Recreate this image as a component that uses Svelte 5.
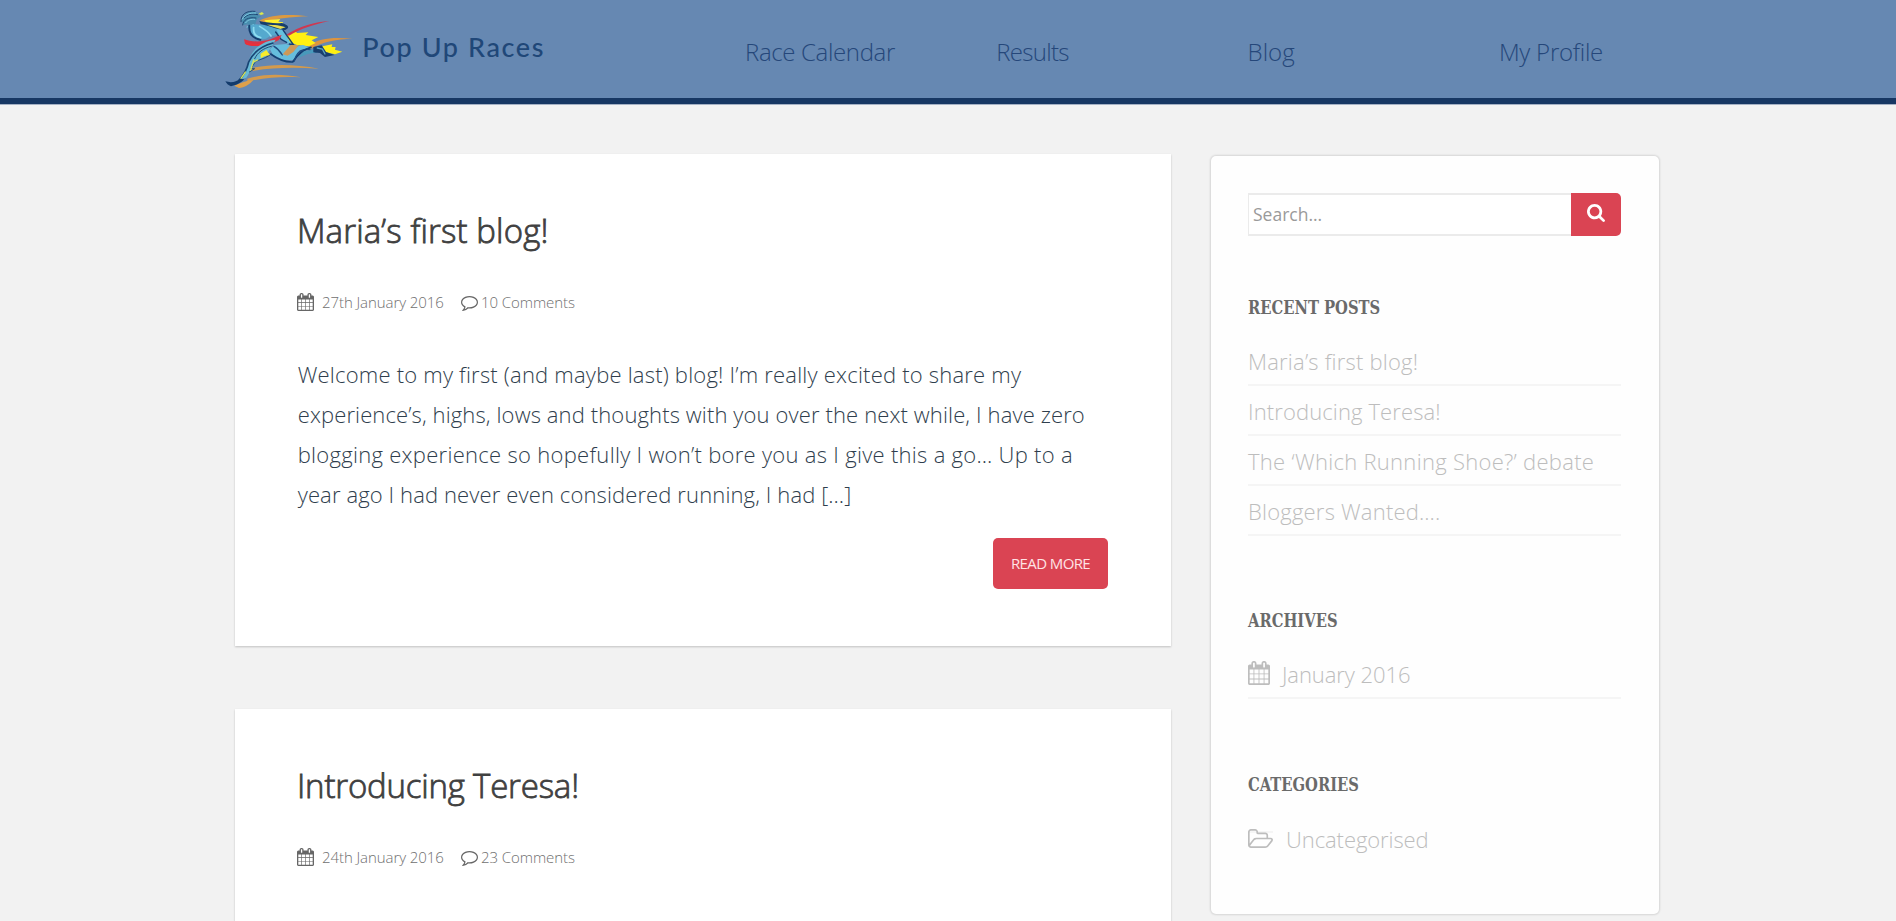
<script>
  const nav = [
    { label: 'Race Calendar', fit: 't1' },
    { label: 'Results', fit: 't3' },
    { label: 'Blog', fit: 't0' },
    { label: 'My Profile', fit: 't2' }
  ];
  const posts = [
    {
      title: 'Maria’s first blog!',
      wide: true,
      date: '27th January 2016',
      comments: '10 Comments',
      lines: [
        ['Welcome to my first (and maybe last) blog! I’m really excited to share my', 'w2'],
        ['experience’s, highs, lows and thoughts with you over the next while, I have zero', 'w1'],
        ['blogging experience so hopefully I won’t bore you as I give this a go… Up to a', 'w3'],
        ['year ago I had never even considered running, I had […]', 'w1']
      ]
    },
    { title: 'Introducing Teresa!', date: '24th January 2016', comments: '23 Comments', lines: [] }
  ];
  const widgets = [
    {
      title: 'Recent Posts',
      items: [
        ['Maria’s first blog!', 'w2'],
        ['Introducing Teresa!', 'w1'],
        ['The ‘Which Running Shoe?’ debate', 'w3'],
        ['Bloggers Wanted….', 'w2']
      ]
    },
    { title: 'Archives', icon: 'calendar', items: [['January 2016', 't4']] },
    { title: 'Categories', icon: 'folder', items: [['Uncategorised', 't4']] }
  ];
</script>

{#snippet calendar()}
  <svg class="calendar" viewBox="64 0 1664 1792" preserveAspectRatio="none" aria-hidden="true"><path d="M192 1664h288v-288h-288v288zm352 0h320v-288h-320v288zm-352-352h288v-320h-288v320zm352 0h320v-320h-320v320zm-352-384h288v-288h-288v288zm736 736h320v-288h-320v288zm-384-736h320v-288h-320v288zm768 736h288v-288h-288v288zm-384-352h320v-320h-320v320zm-352-864v-288q0-13-9.500-22.500t-22.500-9.500h-64q-13 0-22.500 9.500t-9.500 22.500v288q0 13 9.500 22.500t22.500 9.500h64q13 0 22.500-9.500t9.500-22.500zm736 864h288v-320h-288v320zm-384-384h320v-288h-320v288zm384 0h288v-288h-288v288zm32-480v-288q0-13-9.500-22.500t-22.500-9.500h-64q-13 0-22.500 9.500t-9.500 22.500v288q0 13 9.500 22.500t22.500 9.500h64q13 0 22.500-9.500t9.500-22.500zm384-64v1280q0 52-38 90t-90 38h-1408q-52 0-90-38t-38-90v-1280q0-52 38-90t90-38h128v-96q0-66 47-113t113-47h64q66 0 113 47t47 113v96h384v-96q0-66 47-113t113-47h64q66 0 113 47t47 113v96h128q52 0 90 38t38 90z" /></svg>
{/snippet}

<header>
  <div class="bar">
    <a class="brand" href="#home">
      <svg class="runner" viewBox="30 25 385 245" aria-hidden="true">
        <g fill="none" stroke-linecap="round">
          <path d="M110 205C170 192 240 193 312 207C240 203 175 203 112 214Z" fill="#d39a4c" />
          <path d="M97 237C140 223 200 222 258 233C200 231 150 233 97 246Z" fill="#d39a4c" />
          <path d="M58 258C80 247 100 243 115 240C105 254 88 263 72 265Z" fill="#dfa04a" />
          <path d="M135 62C170 44 225 43 280 50C230 52 175 56 140 72Z" fill="#dc9a40" />
          <path d="M283 138C310 115 355 112 412 117C365 119 325 124 287 148Z" fill="#dc9440" />
          <path d="M148 62L196 58L190 66L205 68L192 84L160 76Z" fill="#fff02c" />
          <path d="M215 108L240 92L246 100L280 98L272 106L310 112L290 122L302 130L282 140L246 136L222 126Z" fill="#fff012" />
          <path d="M322 140L352 134L350 142L362 142L360 150L382 156L360 164L334 158Z" fill="#fff012" />
          <path d="M84 52C92 37 112 32 133 40L120 44L139 50L126 58L118 82L96 86L100 74L86 76L80 64Z" fill="#498eaf" />
          <path d="M78 66C76 43 96 32 120 35M88 54C96 44 112 41 128 45M83 76C84 61 99 51 123 55" stroke="#1d4773" stroke-width="3" />
          <path d="M82 58C90 43 105 39 122 40M92 69C99 60 108 58 119 59M96 82L116 75" stroke="#83cce4" stroke-width="3" />
          <path d="M131 42L141 37L147 43L138 46Z" fill="#dae84c" />
          <path d="M98 78L121 74L147 76L180 83L205 95L211 111L189 107L167 108L153 117L126 121L108 108Z" fill="#55a9ce" />
          <path d="M103 78C101 100 111 115 136 120" stroke="#153e6e" stroke-width="6" />
          <path d="M116 84C114 102 122 111 137 114M134 80C153 91 163 101 168 109" stroke="#8ddcf0" stroke-width="5" />
          <path d="M133 64C158 69 179 72 200 70C222 77 225 84 211 91C192 92 172 81 137 73Z" fill="#173e6c" />
          <path d="M156 75C178 75 199 77 212 83L196 88Z" fill="#e7dc52" />
          <path d="M184 88L201 90L232 137L217 132L195 112Z" fill="#66c1df" />
          <path d="M205 92L236 136L223 133M182 97L198 119L215 128" stroke="#143e70" stroke-width="4" />
          <path d="M87 119C109 127 140 128 166 119C180 113 190 109 200 106L192 121C162 139 105 145 90 132Z" fill="#d93446" />
          <path d="M214 105C255 80 300 66 343 65C300 73 255 88 222 108Z" fill="#cf3850" />
          <path d="M95 132C117 137 143 137 169 128" stroke="#ed3037" stroke-width="5" />
          <path d="M178 136L214 133L238 143L264 136L288 146L253 152L235 181L205 181L174 165L165 149Z" fill="#66bddd" />
          <path d="M203 164L227 136L252 136L235 157L218 168Z" fill="#cd9958" />
          <path d="M167 163C190 180 211 188 233 187C245 168 259 151 288 143" stroke="#123f73" stroke-width="5" />
          <path d="M177 140C191 148 196 156 202 166M238 184C243 164 253 153 267 150M275 147L302 158L315 151" stroke="#1d4b80" stroke-width="4" />
          <path d="M247 176L267 155L293 150L307 158L278 163Z" fill="#4899bb" />
          <path d="M295 142L320 137L333 157L359 166L330 172L315 160L295 158Z" fill="#193e6c" />
          <path d="M307 145L322 148L330 163" stroke="#5ba3be" stroke-width="4" />
          <path d="M182 120C143 124 117 145 105 173L94 208L76 239L94 234L111 206L122 186L151 171L165 148Z" fill="#67bad5" />
          <path d="M174 130C140 139 113 160 101 187C96 210 87 226 72 242" stroke="#184474" stroke-width="5" />
          <path d="M169 140C144 146 128 158 119 177M142 164L165 166L151 174L122 185L108 207L119 207L103 217" stroke="#244f75" stroke-width="3" />
          <path d="M137 162L154 151L165 166L148 170L137 176Z" fill="#f8ec2d" />
          <path d="M116 181L107 211M128 181L116 187M91 217L78 236" stroke="#dae358" stroke-width="4" />
          <path d="M31 245C49 250 64 247 75 237L88 239C76 252 61 257 48 260C39 257 35 251 31 245Z" fill="#133b6b" />
        </g>
      </svg>
      <span class="name">Pop Up Races</span>
    </a>
    <nav>
      {#each nav as n}<a href="#nav" class={n.fit}>{n.label}</a>{/each}
    </nav>
  </div>
</header>

<div class="page">
  <main>
    {#each posts as p}
      <article>
        <h2 class:wide={p.wide}>{p.title}</h2>
        <div class="meta">
          {@render calendar()}<span class="date">{p.date}</span>
          <svg class="comment" viewBox="0 256 1792 1536" preserveAspectRatio="none" aria-hidden="true"><path d="M896 384q-204 0-381.500 69.500t-282 187.500-104.500 255q0 112 71.500 213.500t201.500 175.500l87 50-27 96q-24 91-70 172 152-63 275-171l43-38 57 6q69 8 130 8 204 0 381.500-69.500t282-187.500 104.500-255-104.500-255-282-187.500-381.500-69.500zm896 512q0 174-120 321.500t-326 233-450 85.500q-70 0-145-8-198 175-460 242-49 14-114 22h-5q-15 0-27-10.500t-16-27.500v-1q-3-4-.5-12t2-10 4.500-9.500l6-9 7-8.500 8-9q7-8 31-34.500t34.500-38 31-39.500 32.500-51 27-59 26-76q-157-89-247.500-220t-90.500-281q0-174 120-321.500t326-233 450-85.500 450 85.500 326 233 120 321.500z" /></svg><span>{p.comments}</span>
        </div>
        {#if p.lines.length}
          <p>{#each p.lines as l}<span class="line {l[1]}">{l[0]} </span>{/each}</p>
          <a class="more" href="#more">READ MORE</a>
        {/if}
      </article>
    {/each}
  </main>

  <aside>
    <form class="search">
      <input type="text" placeholder="Search..." />
      <button type="button" aria-label="Search"><svg viewBox="64 128 1664 1664" aria-hidden="true"><path d="M1216 832q0-185-131.500-316.500t-316.500-131.500-316.500 131.500-131.500 316.500 131.500 316.500 316.500 131.500 316.500-131.500 131.500-316.500zm512 832q0 52-38 90t-90 38q-54 0-90-38l-343-342q-179 124-399 124-143 0-273.500-55.500t-225-150-150-225-55.500-273.500 55.500-273.500 150-225 225-150 273.500-55.500 273.500 55.500 225 150 150 225 55.500 273.500q0 220-124 399l343 343q37 37 37 90z" /></svg></button>
    </form>
    {#each widgets as w}
      <section>
        <h3><span>{w.title}</span></h3>
        <ul>
          {#each w.items as it}
            <li class={w.icon}>
              {#if w.icon === 'calendar'}{@render calendar()}{/if}
              {#if w.icon === 'folder'}<svg class="folder" viewBox="0 128 1909 1408" preserveAspectRatio="none" aria-hidden="true"><path d="M1781 931q0-35-53-35h-1088q-40 0-85.500 21.500t-71.500 52.500l-294 363q-18 24-18 40 0 35 53 35h1088q40 0 86-22t71-53l294-363q18-22 18-39zm-1141-163h768v-160q0-40-28-68t-68-28h-576q-40 0-68-28t-28-68v-64q0-40-28-68t-68-28h-320q-40 0-68 28t-28 68v853l256-315q44-53 116-87.500t140-34.500zm1269 163q0 62-46 120l-295 363q-43 53-116 87.500t-140 34.500h-1088q-92 0-158-66t-66-158v-960q0-92 66-158t158-66h320q92 0 158 66t66 158v32h544q92 0 158 66t66 158v160h192q54 0 99 24.500t67 70.500q15 32 15 68z" /></svg>{/if}
              <a href="#item" class={it[1]}>{it[0]}</a>
            </li>
          {/each}
        </ul>
      </section>
    {/each}
  </aside>
</div>

<style>
  :global(body) { background: #f2f2f2; font-family: "Open Sans", sans-serif; overflow: hidden; }
  :global(#app) { height: 921px; overflow: hidden; }
  a { color: inherit; text-decoration: none; }
  svg { display: block; flex: none; }
  h2, h3, p, ul { margin: 0; padding: 0; font-weight: 300; }

  header { height: 98px; background: #6688b2; border-bottom: 6px solid #173763; box-shadow: 0 1px 0 #a5b1c4; }
  .bar { display: flex; padding-left: 225px; }
  .brand { display: flex; width: 520px; }
  .runner { width: 128.300px; height: 81.700px; margin-top: 8.300px; }
  .name { margin-left: 9px; font: 500 27px/34px Lato, sans-serif; letter-spacing: 1.600px; color: #204778; padding-top: 30px; }
  nav { display: grid; grid-template-columns: repeat(4, 251.300px); padding-top: 35px; font-size: 24px; line-height: 34px; font-weight: 300; color: #25477a; }

  .t0 { letter-spacing: 0; }
  .t1 { letter-spacing: -0.350px; }
  .t2 { letter-spacing: -0.250px; }
  .t3 { letter-spacing: -0.700px; }
  .t4 { letter-spacing: -0.080px; }
  .w1 { letter-spacing: 0.120px; }
  .w2 { letter-spacing: 0.210px; }
  .w3 { letter-spacing: 0.290px; }

  .page { display: flex; align-items: flex-start; gap: 40px; padding: 50px 0 0 235px; }
  main { width: 936px; display: flex; flex-direction: column; gap: 63px; }
  article { box-sizing: border-box; height: 492px; background: #fff; padding: 57px 63px 0 62px; box-shadow: 0 1px 2px rgba(0, 0, 0, .2); }
  h2 { font-size: 33px; line-height: 40px; font-weight: 300; color: #404040; letter-spacing: -0.200px; -webkit-text-stroke: 0.800px #404040; }
  h2.wide { letter-spacing: 0.120px; }
  .meta { display: flex; margin-top: 41px; height: 20px; font-size: 15px; line-height: 20px; font-weight: 300; color: #6f6f6f; letter-spacing: -0.080px; }
  .meta .calendar { width: 17px; height: 18px; margin: 1px 8px 0 0; fill: #666; }
  .date { width: 139px; }
  .comment { width: 17px; height: 15px; margin: 4px 3px 0 0; fill: #666; }
  p { margin-top: 42px; padding-left: 0.700px; font-size: 22px; line-height: 40px; color: #2f3e4d; white-space: nowrap; }
  .line { display: block; }
  .more { display: block; width: 115px; height: 51px; margin: 24px 0 0 auto; border-radius: 5px; background: #da4453; color: #ffe3e5; font-size: 15px; line-height: 51px; text-align: center; letter-spacing: -0.600px; }

  aside { box-sizing: border-box; width: 448px; height: 758px; margin-top: 1.500px; padding: 37px 38px 0 37px; background: #fefefe; border-radius: 5px; box-shadow: 0 0 2px 1px rgba(0, 0, 0, .12); }
  .search { display: flex; height: 43px; margin-bottom: 58px; }
  input { box-sizing: border-box; width: 323px; height: 43px; padding: 0 4px; border: 2px solid #ebebeb; border-right: 0; border-left-width: 1px; background: #fff; font: 17.500px "Open Sans", sans-serif; }
  input::placeholder { color: #9a9a9a; opacity: 1; }
  button { flex: 1; height: 43px; padding: 0 0 3px; border: 0; border-radius: 0 5px 5px 0; background: #da4453; display: flex; align-items: center; justify-content: center; }
  button svg { width: 18px; height: 18px; fill: #fff; }
  section { margin-bottom: 71.500px; }
  h3 { font: bold 18px/28px "DejaVu Serif Condensed", "DejaVu Serif", serif; font-stretch: 75%; text-transform: uppercase; color: #6a6a6a; margin-bottom: 14px; white-space: nowrap; }
  h3 span { display: inline-block; transform: scaleX(.91); transform-origin: 0 50%; }
  li { box-sizing: border-box; display: flex; height: 50px; border-bottom: 2px solid #f5f5f5; font-size: 22px; line-height: 50px; color: #bdbdbd; list-style: none; white-space: nowrap; }
  li .calendar { width: 22px; height: 24px; margin: 12px 12px 0 0; fill: #bdbdbd; }
  .folder { width: 25px; height: 19px; margin: 15px 13px 0 0; fill: #bdbdbd; }
</style>
